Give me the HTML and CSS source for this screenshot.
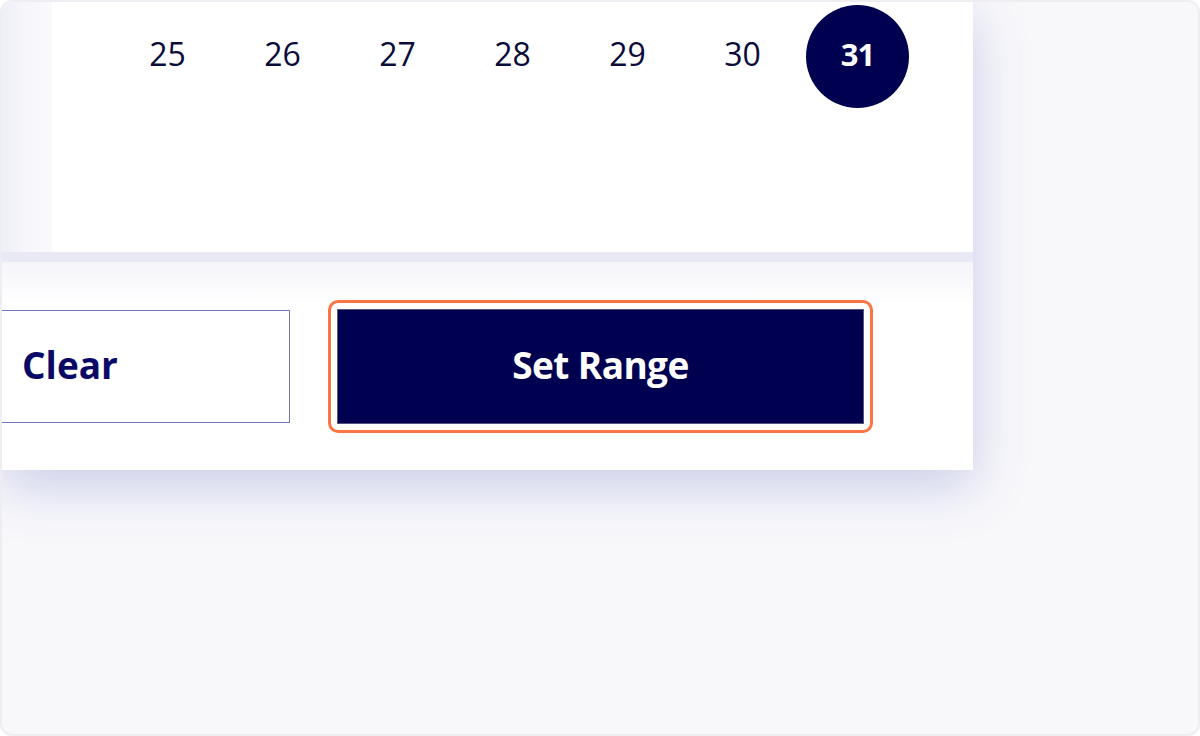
FILE: index.html
```html
<!DOCTYPE html>
<html lang="en">
<head>
<meta charset="utf-8">
<title>Date range picker</title>
<link rel="stylesheet" href="styles.css">
</head>
<body>
<div class="frame">
  <div class="card">
    <div class="calendar">
      <div class="gutter"></div>
      <div class="month">
        <div class="week">
          <span class="day">25</span>
          <span class="day">26</span>
          <span class="day">27</span>
          <span class="day">28</span>
          <span class="day">29</span>
          <span class="day">30</span>
          <span class="day day-selected"><span class="dot">31</span></span>
        </div>
      </div>
    </div>
    <div class="divider"></div>
    <div class="footer">
      <button class="btn btn-clear" type="button">Clear</button>
      <div class="focus-ring">
        <button class="btn btn-primary" type="button">Set Range</button>
      </div>
    </div>
  </div>
</div>
</body>
</html>
```

FILE: styles.css
```css
* { box-sizing: border-box; }

html, body {
  margin: 0;
  padding: 0;
  background: #ffffff;
  font-family: "Open Sans", "Liberation Sans", sans-serif;
}

.frame {
  width: 1200px;
  height: 736px;
  border: 2px solid #ededf2;
  border-radius: 12px;
  background: #f8f8fb;
  overflow: hidden;
}

.card {
  width: 971px;
  background: #ffffff;
  box-shadow: 0 16px 50px rgba(70, 80, 180, 0.26);
}

.calendar {
  display: flex;
  height: 250px;
}

.gutter {
  width: 50px;
  background: linear-gradient(to right, #eeeff7 0%, #f6f6fb 45%, #fafafd 100%);
}

.month {
  flex: 1;
  background: #ffffff;
  padding: 2px 58px 0;
}

.week {
  display: grid;
  grid-template-columns: repeat(7, 115px);
  height: 104px;
}

.day {
  display: flex;
  align-items: center;
  justify-content: center;
  padding-bottom: 5px;
  font-size: 32px;
  font-weight: 500;
  color: #0b0b3a;
}

.day-selected {
  padding-bottom: 0;
}

.dot {
  width: 103px;
  height: 103px;
  padding-bottom: 4px;
  border-radius: 50%;
  background: #000050;
  color: #ffffff;
  font-weight: 700;
  font-size: 31px;
  letter-spacing: -1px;
  display: flex;
  align-items: center;
  justify-content: center;
}

.divider {
  height: 10px;
  background: #e8e9f5;
}

.footer {
  height: 208px;
  display: flex;
  align-items: center;
  gap: 38px;
  background: linear-gradient(to bottom, #f5f5fa 0px, #fbfbfd 25px, #ffffff 45px);
}

.btn {
  font-family: "Open Sans", "Liberation Sans", sans-serif;
  font-size: 37px;
  font-weight: 700;
  height: 115px;
  padding: 0 0 4px;
  cursor: pointer;
}

.btn-clear {
  margin-left: -152px;
  width: 440px;
  height: 113px;
  background: #ffffff;
  border: 1px solid #7375c0;
  color: #0a0a66;
}

.focus-ring {
  border: 3px solid #fb7443;
  border-radius: 10px;
  padding: 6px;
  background: #ffffff;
}

.btn-primary {
  display: block;
  width: 527px;
  background: #000050;
  border: 1px solid #55557a;
  color: #ffffff;
  letter-spacing: -0.6px;
}
```
